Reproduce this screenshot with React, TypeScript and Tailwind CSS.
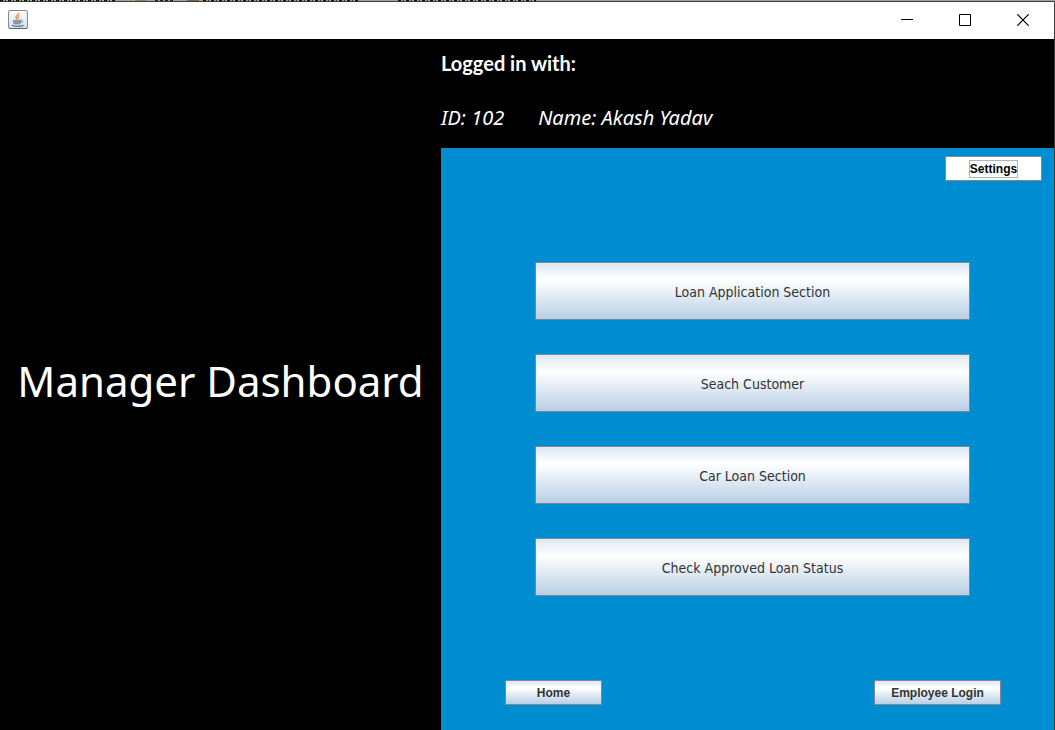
import type { ReactNode } from "react";

const sections = [
  "Loan Application Section",
  "Seach Customer",
  "Car Loan Section",
  "Check Approved Loan Status",
];

const metal =
  "border border-[#7a8a99] bg-linear-to-b from-[#dde8f3] via-white via-30% to-[#b8cfe5] text-[#333333]";

function JavaIcon() {
  return (
    <svg width="20" height="20" viewBox="0 0 20 20" aria-hidden="true">
      <defs>
        <linearGradient id="tile" x1="0" y1="0" x2="0" y2="1">
          <stop offset="0" stopColor="#ffffff" />
          <stop offset="1" stopColor="#d3dbe3" />
        </linearGradient>
      </defs>
      <rect x="0.5" y="0.5" width="19" height="18" rx="1.5" fill="url(#tile)" stroke="#7d8b99" />
      <path d="M1 18.5h18" stroke="#56697c" />
      <path d="M10.8 3c.6 1.800-3.200 2.600-2.800 4.200.2.800 1 1.200 1.200 2" fill="none" stroke="#ee8a3c" strokeWidth="1.500" />
      <path d="M11.600 5.600c-1.400.6-1.800 1.400-.8 3" fill="none" stroke="#f0a060" strokeWidth="1.200" />
      <path d="M5.500 10.200h7v2.200c0 1-.8 1.600-1.600 1.600H7.200c-1 0-1.700-.6-1.700-1.600z" fill="#8b9baa" stroke="#6b7d8f" strokeWidth=".6" />
      <path d="M12.500 10.300c2.600-.5 2.600 2.100-.3 2.400" fill="none" stroke="#71859a" />
      <path d="M4 15.200c1.500 1.600 9.500 1.600 11.500 0" fill="none" stroke="#5d7188" strokeWidth="1.200" />
    </svg>
  );
}

function WindowButton({ label, children }: { label: string; children: ReactNode }) {
  return (
    <button type="button" aria-label={label} className="flex h-full w-[58px] items-center justify-center text-black">
      <svg width="12" height="12" viewBox="0 0 12 12" fill="none" stroke="currentColor" aria-hidden="true">
        {children}
      </svg>
    </button>
  );
}

export default function App() {
  return (
    <div className="flex min-h-screen flex-col bg-black">
      <div className="flex h-px bg-[#a3a29c]">
        <div className="w-[115px] bg-[repeating-linear-gradient(90deg,#111_0_3px,#a3a29c_3px_5px,#333_5px_6px,#b5b0a0_6px_8px)]" />
        <div className="ml-5 w-3 bg-[#9c8552]" />
        <div className="ml-2 w-5 bg-[repeating-linear-gradient(90deg,#222_0_3px,#a3a29c_3px_5px)]" />
        <div className="ml-3 w-3 bg-[#8a5b3c]" />
        <div className="ml-1 w-[155px] bg-[repeating-linear-gradient(90deg,#111_0_3px,#a3a29c_3px_5px,#333_5px_6px,#b5b0a0_6px_8px)]" />
        <div className="ml-10 w-[138px] bg-[repeating-linear-gradient(90deg,#111_0_3px,#a3a29c_3px_5px,#333_5px_6px,#b5b0a0_6px_8px)]" />
      </div>
      <div className="flex grow flex-col border-t border-r border-[#3f3f3f]">
        <header className="flex h-[37px] items-center justify-between bg-white pr-0.5 pb-0.5 pl-2">
          <JavaIcon />
          <div className="flex h-full">
            <WindowButton label="Minimize">
              <path d="M0 5.500h12" />
            </WindowButton>
            <WindowButton label="Maximize">
              <path d="M.5 .5h11v11H.5z" />
            </WindowButton>
            <WindowButton label="Close">
              <path d="M.3 .3l11.400 11.400M11.700 .3L.3 11.700" strokeWidth="1.200" />
            </WindowButton>
          </div>
        </header>

        <main className="grid grow grid-cols-[441fr_613fr]">
          <div className="flex items-center justify-center pb-2">
            <h1 className="font-['Noto_Sans',sans-serif] text-[42px] leading-none whitespace-nowrap text-white">
              Manager Dashboard
            </h1>
          </div>

          <div className="flex flex-col">
            <div className="flex h-[109px] flex-col justify-between pt-3 pb-[18px] text-xl leading-6 text-white">
              <h2 className="font-['Lato',sans-serif] font-bold">Logged in with:</h2>
              <p className="flex gap-[34px] font-['Noto_Sans',sans-serif] italic">
                <span>ID: 102</span>
                <span>Name: Akash Yadav</span>
              </p>
            </div>

            <div className="flex grow flex-col bg-[#008cd0]">
              <div className="flex justify-end pt-2 pr-3">
                <button
                  type="button"
                  className="flex h-[25px] w-[97px] items-center justify-center border border-[#7a8a99] bg-white font-['Liberation_Sans',sans-serif] text-xs font-bold text-black"
                >
                  <span className="border border-[#a3b8cc] leading-4">Settings</span>
                </button>
              </div>

              <nav className="mt-[81px] flex flex-col gap-[34px] pr-[84px] pl-[94px]">
                {sections.map((label) => (
                  <button
                    key={label}
                    type="button"
                    className={`${metal} h-[58px] pt-0.5 font-['DejaVu_Sans_Condensed','DejaVu_Sans',sans-serif] text-sm`}
                  >
                    {label}
                  </button>
                ))}
              </nav>

              <footer className="mt-auto flex justify-between pt-8 pr-[53px] pb-[25px] pl-16 font-['Liberation_Sans',sans-serif] text-xs font-bold">
                <button type="button" className={`${metal} h-[25px] w-[97px]`}>
                  Home
                </button>
                <button type="button" className={`${metal} h-[25px] w-[127px]`}>
                  Employee Login
                </button>
              </footer>
            </div>
          </div>
        </main>
      </div>
    </div>
  );
}
